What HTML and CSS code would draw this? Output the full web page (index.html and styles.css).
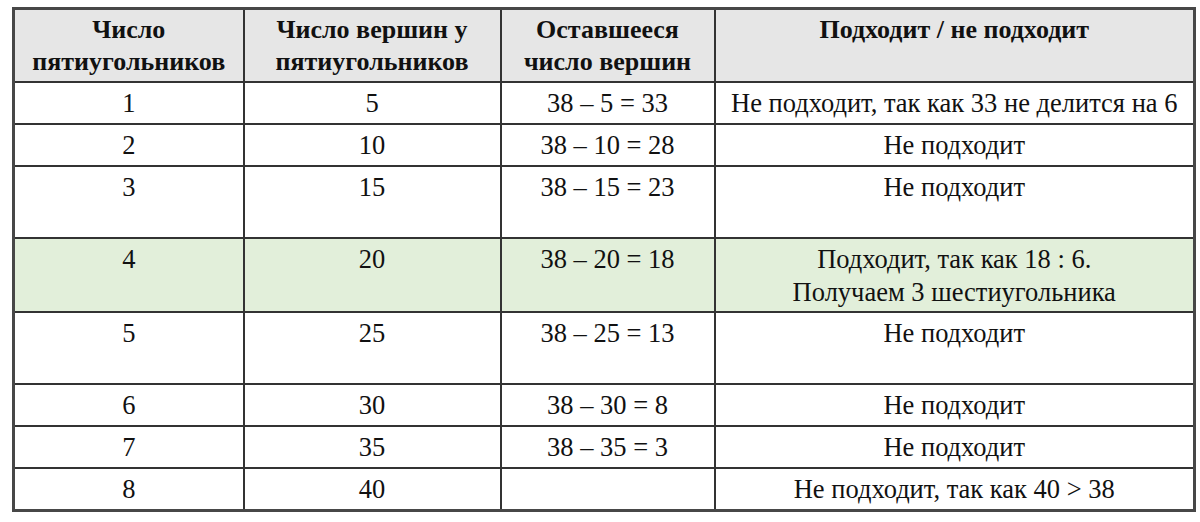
FILE: index.html
```html
<!DOCTYPE html>
<html lang="ru">
<head>
<meta charset="utf-8">
<link rel="stylesheet" href="styles.css">
</head>
<body>
<table class="grid">
  <colgroup>
    <col class="c1"><col class="c2"><col class="c3"><col class="c4">
  </colgroup>
  <thead>
    <tr class="head">
      <th>Число<br>пятиугольников</th>
      <th>Число вершин у<br>пятиугольников</th>
      <th>Оставшееся<br>число вершин</th>
      <th>Подходит / не подходит</th>
    </tr>
  </thead>
  <tbody>
    <tr><td>1</td><td>5</td><td>38 – 5 = 33</td><td>Не подходит, так как 33 не делится на 6</td></tr>
    <tr><td>2</td><td>10</td><td>38 – 10 = 28</td><td>Не подходит</td></tr>
    <tr class="tall"><td>3</td><td>15</td><td>38 – 15 = 23</td><td>Не подходит</td></tr>
    <tr class="tall ok"><td>4</td><td>20</td><td>38 – 20 = 18</td><td>Подходит, так как 18 : 6.<br>Получаем 3 шестиугольника</td></tr>
    <tr class="tall"><td>5</td><td>25</td><td>38 – 25 = 13</td><td>Не подходит</td></tr>
    <tr><td>6</td><td>30</td><td>38 – 30 = 8</td><td>Не подходит</td></tr>
    <tr><td>7</td><td>35</td><td>38 – 35 = 3</td><td>Не подходит</td></tr>
    <tr><td>8</td><td>40</td><td></td><td>Не подходит, так как 40 &gt; 38</td></tr>
  </tbody>
</table>
</body>
</html>
```

FILE: styles.css
```css
html, body {
  background: #ffffff;
}
body {
  margin: 7px 0 0 12px;
  font-family: "Liberation Serif", "Times New Roman", serif;
  color: #111111;
}
.grid {
  border-collapse: collapse;
  table-layout: fixed;
  width: 1181px;
  border: 3px solid #474747;
}
.c1 { width: 230px; }
.c2 { width: 257px; }
.c3 { width: 214px; }
.c4 { width: 480px; }
.grid th,
.grid td {
  border: 2px solid #333333;
  text-align: center;
  vertical-align: top;
  font-size: 26.5px;
  line-height: 32px;
  padding: 4px 2px 4px 2px;
  height: 32px;
  white-space: nowrap;
}
.grid th {
  font-size: 26px;
  font-weight: bold;
  background: #e6e6e6;
  height: 62px;
  padding-top: 4px;
  padding-bottom: 3px;
}
.grid tr.tall td {
  height: 63px;
  padding-bottom: 3px;
}
.grid tr.ok td {
  background: #e2efda;
  line-height: 33px;
}
.grid tr.ok td {
  height: 64px;
  padding-bottom: 2px;
}
```
